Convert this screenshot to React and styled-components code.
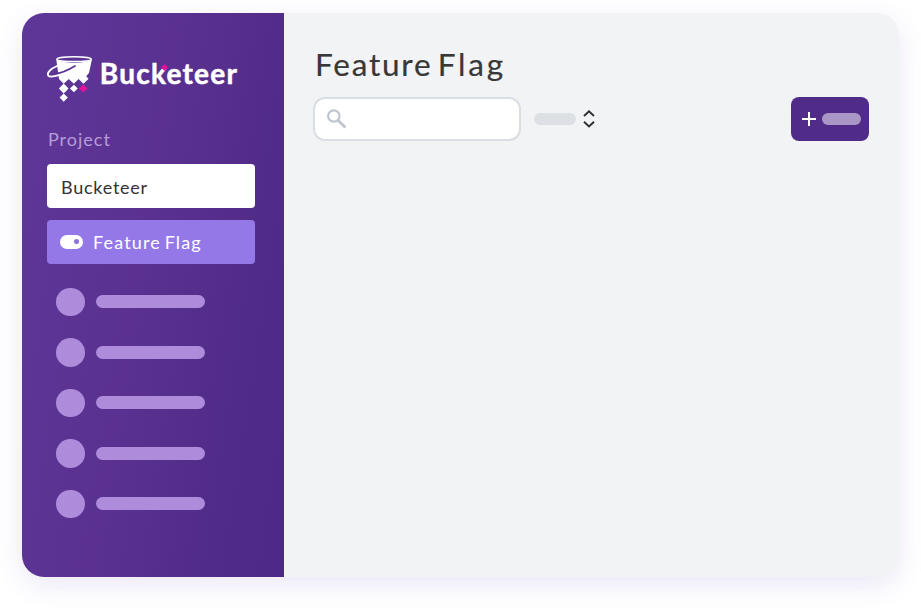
import React from "react";
import styled, { createGlobalStyle } from "styled-components";

const GlobalStyle = createGlobalStyle`
  * { box-sizing: border-box; }
  html, body { margin: 0; background: #fff; }
  body { overflow: hidden; font-family: Lato, "Open Sans", sans-serif; }
`;

const Page = styled.div`
  width: 921px;
  height: 608px;
  padding: 12.6px 22.4px 31px;
  overflow: hidden;
`;

const Window = styled.div`
  display: flex;
  height: 564.4px;
  border-radius: 22px;
  overflow: hidden;
  background: #f2f3f5;
  box-shadow: 0 8px 28px rgba(88, 60, 190, 0.12);
`;

const Sidebar = styled.aside`
  width: 261.6px;
  flex: none;
  display: flex;
  flex-direction: column;
  padding: 42.4px 29px 0 24.6px;
  background: linear-gradient(99deg, #5e3697 8%, #5a3190 45%, #502a87 85%, #4e2985 100%);
`;

const Brand = styled.div`
  display: flex;
  height: 48px;
`;

const BrandMark = styled.svg`
  width: 47px;
  height: 48px;
  flex: none;
`;

const BrandName = styled.div`
  position: relative;
  margin: 1px 0 0 5.8px;
  color: #fff;
  font-weight: 700;
  font-size: 28px;
  line-height: 34px;
  letter-spacing: 1.25px;
  -webkit-text-stroke: 0.5px #fff;
`;

const BrandDot = styled.i`
  position: absolute;
  left: 62.5px;
  top: 9px;
  width: 5px;
  height: 5px;
  border-radius: 1px;
  background: #e5109b;
  transform: rotate(45deg);
`;

const SectionLabel = styled.div`
  margin: 25px 0 0 1px;
  height: 22px;
  line-height: 22px;
  font-size: 18px;
  letter-spacing: 1px;
  color: #b59cda;
`;

const ProjectBox = styled.div`
  display: flex;
  align-items: center;
  height: 44px;
  margin-top: 14px;
  padding: 2px 14px 0;
  border-radius: 4px;
  background: #fff;
  color: #333;
  font-size: 18px;
  letter-spacing: 0.75px;
`;

const ActiveItem = styled.div`
  display: flex;
  align-items: center;
  height: 44px;
  margin-top: 12px;
  padding-left: 13px;
  border-radius: 4px;
  background: #9578e8;
  color: #fff;
`;

const Toggle = styled.span`
  display: flex;
  align-items: center;
  justify-content: flex-end;
  width: 23px;
  height: 14px;
  margin-right: 10px;
  padding-right: 4px;
  border-radius: 7px;
  background: #fff;

  &::after {
    content: "";
    width: 5px;
    height: 5px;
    border-radius: 50%;
    background: #8e70df;
  }
`;

const ActiveText = styled.span`
  font-size: 18px;
  letter-spacing: 1.15px;
  word-spacing: -2px;
`;

const NavList = styled.div`
  display: flex;
  flex-direction: column;
  gap: 22px;
  margin: 23.6px 0 0 9px;
`;

const NavRow = styled.div`
  display: flex;
  align-items: center;
  gap: 11px;
  height: 28.5px;
`;

const NavDot = styled.span`
  width: 29px;
  height: 28.5px;
  border-radius: 50%;
  background: #ae8cdb;
`;

const Bar = styled.span`
  width: ${(p) => p.$width}px;
  height: ${(p) => p.$height}px;
  border-radius: 7px;
  background: ${(p) => p.$color};
`;

const Content = styled.main`
  flex: 1;
  padding: 31.4px 29.6px 0 29px;
`;

const Title = styled.h1`
  margin: 0 0 0 2px;
  height: 43px;
  line-height: 41px;
  font-weight: 400;
  font-size: 31.5px;
  letter-spacing: 1.8px;
  word-spacing: -4.5px;
  color: #383838;
  -webkit-text-stroke: 0.2px #383838;
`;

const TitleWord = styled.span`
  letter-spacing: 2.8px;
`;

const Toolbar = styled.div`
  display: flex;
  align-items: center;
  margin-top: 10px;
  height: 44px;
`;

const Search = styled.div`
  display: flex;
  align-items: center;
  width: 208px;
  height: 44px;
  margin-right: 13px;
  padding-left: 12px;
  border: 2px solid #dadee4;
  border-radius: 12px;
  background: #fff;
`;

const AddButton = styled.button`
  display: flex;
  align-items: center;
  gap: 6px;
  width: 78px;
  height: 44px;
  margin-left: auto;
  padding: 0 0 0 11px;
  border: 0;
  border-radius: 8px;
  background: #512b88;
`;

const Sort = styled.svg`
  margin-left: 6.6px;
`;

function BucketLogo() {
  return (
    <BrandMark viewBox="47 55 47 48">
      <path
        d="M56.2 59 L59 79 L63.7 83.8 L68.8 79 L73.8 83.8 L78.6 79 L83.5 83.8 L88.6 78.8 L86.2 76.2 L89 73 L92 59 C88 64 61 64 56.2 59Z"
        fill="#fff"
      />
      <ellipse cx="74.1" cy="59.2" rx="17.2" ry="2.4" fill="#5b3393" stroke="#fff" strokeWidth="1.5" />
      <path d="M55.5 73.8 C62 73 69 69.6 75 66" fill="none" stroke="#5a3292" strokeWidth="1.7" strokeLinecap="round" />
      <path
        d="M57 66 C50.5 68.8 46.6 72.8 48.2 75.5 C49.3 77.2 54 76.7 59 75.2"
        fill="none"
        stroke="#fff"
        strokeWidth="1.9"
        strokeLinecap="round"
      />
      <path
        d="M63.7 83.6l4.8 4.9-4.8 4.9-4.8-4.9zM73.9 84.7l3.9 3.8-3.9 3.8-3.9-3.8zM63.7 93.5l4.1 4.1-4.1 4.1-4.1-4.1z"
        fill="#fff"
      />
      <path d="M83.3 84.4l4.2 4.1-4.2 4.1-4.2-4.1z" fill="#e5109b" />
    </BrandMark>
  );
}

export default function App() {
  return (
    <>
      <GlobalStyle />
      <Page>
        <Window>
          <Sidebar>
            <Brand>
              <BucketLogo />
              <BrandName>
                Bucketeer
                <BrandDot />
              </BrandName>
            </Brand>
            <SectionLabel>Project</SectionLabel>
            <ProjectBox>Bucketeer</ProjectBox>
            <ActiveItem>
              <Toggle />
              <ActiveText>Feature Flag</ActiveText>
            </ActiveItem>
            <NavList>
              {[0, 1, 2, 3, 4].map((row) => (
                <NavRow key={row}>
                  <NavDot />
                  <Bar $width={109.5} $height={13} $color="#ae8cdb" />
                </NavRow>
              ))}
            </NavList>
          </Sidebar>
          <Content>
            <Title>
              Feature <TitleWord>Flag</TitleWord>
            </Title>
            <Toolbar>
              <Search>
                <svg width="20" height="20" viewBox="0 0 20 20" fill="none" stroke="#bfc5ce">
                  <circle cx="6.8" cy="7" r="5.7" strokeWidth="2.2" />
                  <path d="M10.8 11 L18.4 18.6" strokeWidth="2.8" />
                </svg>
              </Search>
              <Bar $width={42} $height={12} $color="#dce0e5" />
              <Sort width="12" height="18" viewBox="0 0 12 18" fill="none" stroke="#2f2f2f" strokeWidth="1.9">
                <path d="M1 6 L6 1.3 L11 6 M1 11.7 L6 16.4 L11 11.7" />
              </Sort>
              <AddButton>
                <svg width="14" height="14" viewBox="0 0 14 14" stroke="#fff" strokeWidth="2">
                  <path d="M7 0 V14 M0 7 H14" />
                </svg>
                <Bar $width={39} $height={12} $color="#aa96c6" />
              </AddButton>
            </Toolbar>
          </Content>
        </Window>
      </Page>
    </>
  );
}
